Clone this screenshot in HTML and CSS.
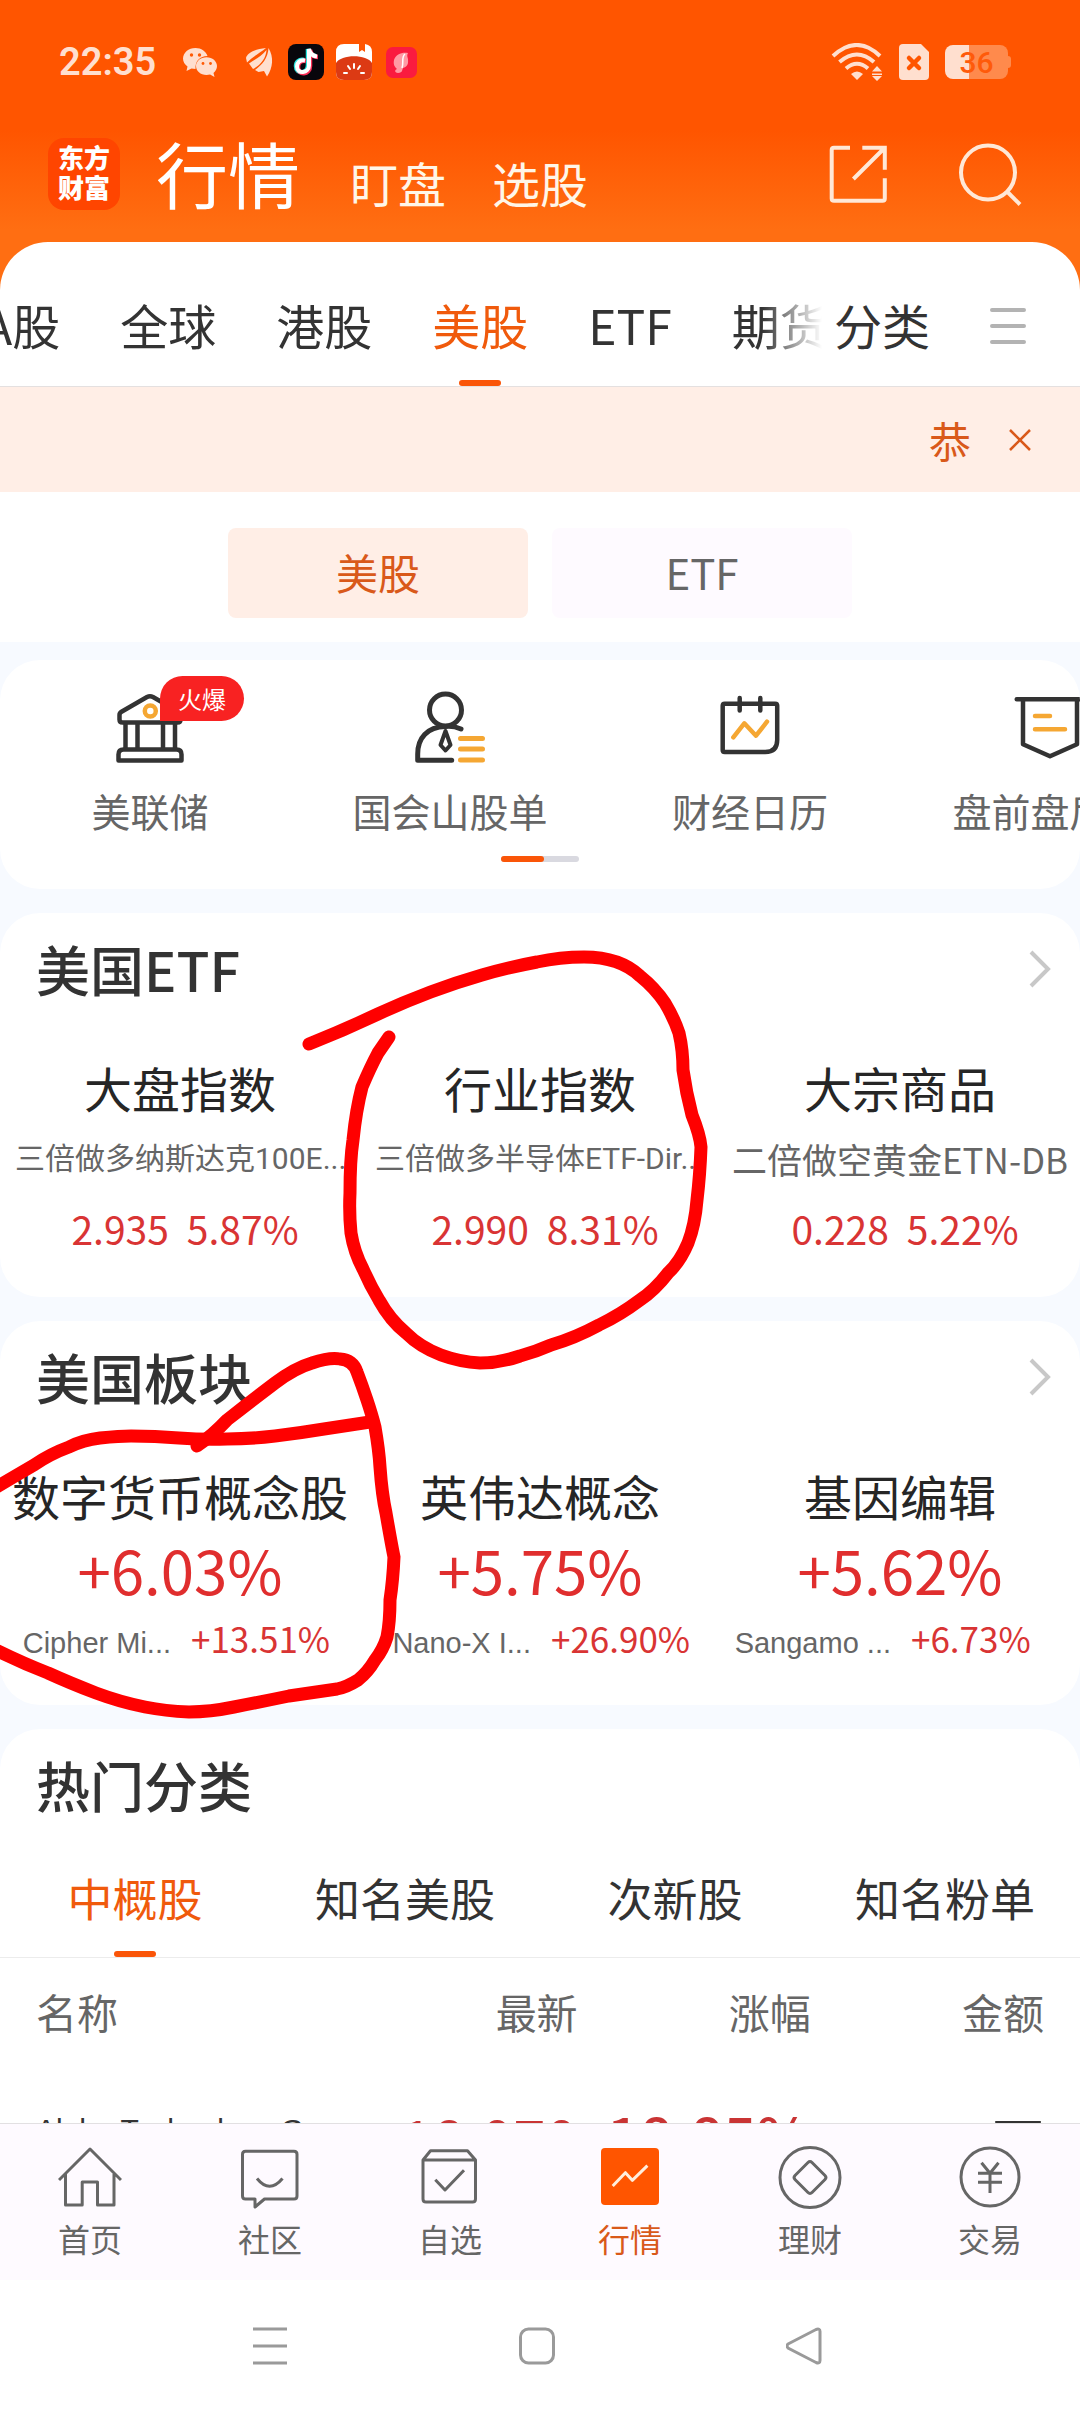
FILE: index.html
```html
<!DOCTYPE html>
<html lang="zh-CN">
<head>
<meta charset="utf-8">
<meta name="viewport" content="width=device-width, initial-scale=1">
<title>行情 - 东方财富</title>
<link rel="stylesheet" href="styles.css">
</head>
<body>
<div class="app">
  <header class="top">
    <div class="status">
      <span class="clock">22:35</span>
      <svg class="wechat" width="36" height="36" viewBox="0 0 36 36" fill="#ffdfcf">
        <path d="M13.500 4C6.500 4 1 8.700 1 14.500c0 3.200 1.700 6 4.500 8L4.500 27l5-2.500c1.300.3 2.600.5 4 .5C13 17 18 12 25.500 12 24 7.300 19.200 4 13.500 4z"/>
        <path d="M24.500 13.200C18.500 13.200 14 17.200 14 22.100S18.500 31 24.500 31c1.300 0 2.500-.2 3.600-.5L32.500 33l-1-4c2.200-1.700 3.500-4.100 3.500-6.900 0-4.900-4.500-8.900-10.500-8.900z"/>
        <g fill="#ff5a04"><circle cx="9.500" cy="11" r="1.700"/><circle cx="17.500" cy="11" r="1.700"/><circle cx="21" cy="19.500" r="1.400"/><circle cx="28.500" cy="19.500" r="1.400"/></g>
      </svg>
      <svg width="36" height="36" viewBox="0 0 36 36" fill="#ffdfcf">
        <path d="M26 4C15 5 7 9 6 14l1 4.500C12 13 20 9 26 4z"/>
        <path d="M26.500 6C21 13 14 16 9 19.500l4 5.500C21 21 26 14 26.500 6z"/>
        <path d="M28.500 4C28 14 22 21 15 26l3.500 2 5.500-1 3 5.500C33 24 34 13 28.500 4z"/>
      </svg>
      <svg width="36" height="36" viewBox="0 0 36 36">
        <rect width="36" height="36" rx="8" fill="#08060c"/>
        <g fill="none" stroke-width="4.500"><path d="M16 16c-5-1-8 2-8 6 0 9 12 8 12-1V5c1 5 4 7 8 7" stroke="#28e6e0"/><path d="M18 17c-5-1-8 2-8 6 0 9 12 8 12-1V6c1 5 4 7 8 7" stroke="#fb2c55"/><path d="M17 16.500c-5-1-8 2-8 6 0 8 12 7 12-1V5c1 5 4 7 8 7.500" stroke="#fff" stroke-width="4"/></g>
      </svg>
      <svg width="36" height="36" viewBox="0 0 36 36">
        <path d="M8 0h15v8l3-2 3 2V0q7 1 7 8v20q0 8-8 8H8q-8 0-8-8V8q0-8 8-8z" fill="#fff"/>
        <path d="M0 19C5 10 31 10 36 19v9q0 8-8 8H8q-8 0-8-8z" fill="#dc3a14"/>
        <g stroke="#fff" stroke-width="2" stroke-linecap="round"><path d="M18 20v4M12 22l2 3M24 22l-2 3M8 29h3M25 29h3"/></g>
      </svg>
      <svg width="36" height="36" viewBox="0 0 36 36">
        <rect x="2" y="3" width="31" height="31" rx="7" fill="#fa1b3f"/>
        <path d="M24 9c-6-1-12 1-14 7-1 5 1 7 3 9-3 1-2 4 1 4 5 0 4-4 5-5 6-2 5-6 5-9-1-3-1-4 0-6z" fill="#ff9aa4"/>
        <path d="M21 10c-4 3-1 9-3 14" stroke="#fff" stroke-width="1.500" fill="none"/>
      </svg>
      <div class="status-right">
        <svg width="54" height="38" viewBox="0 0 54 38" fill="none" stroke="#ffdfcf" stroke-width="4">
          <path d="M2 13Q26-9 49 13"/><path d="M8.500 19Q26 4 43 19"/><path d="M15 25.500Q26 16 37 25.500"/>
          <path d="M20 31q6-5 12 0l-6 6z" fill="#ffdfcf" stroke="none"/>
          <path d="M46 23l5 5.500H41zM41 30.500h10v1.500H41zM46 38l5-5H41z" fill="#ffdfcf" stroke="none"/>
        </svg>
        <svg width="30" height="38" viewBox="0 0 30 38">
          <path d="M4 1h18l8 8v24q0 4-4 4H4q-4 0-4-4V5q0-4 4-4z" fill="#ffdfcf"/>
          <path d="M10 15l10 10M20 15L10 25" stroke="#ff5500" stroke-width="4.500" stroke-linecap="round"/>
        </svg>
        <div class="battery"><span>36</span></div>
      </div>
    </div>
    <div class="titlebar">
      <div class="logo">东方<br>财富</div>
      <nav class="modes">
        <a class="mode mode-on" href="#quotes">行情</a>
        <a class="mode" href="#watch">盯盘</a>
        <a class="mode" href="#pick">选股</a>
      </nav>
      <div class="actions">
        <button aria-label="分享"><svg width="60" height="60" viewBox="0 0 60 60" fill="none" stroke="#ffe8d6" stroke-width="4"><path d="M22 3.700H6q-2.300 0-2.300 2.300v48.500q0 2.300 2.300 2.300h48.500q2.300 0 2.300-2.300V34.300M34.300 3.700h22.500v22M56 4.500L25.400 35"/></svg></button>
        <button aria-label="搜索"><svg width="64" height="64" viewBox="0 0 64 64" fill="none" stroke="#ffe8d6" stroke-width="4"><circle cx="30" cy="30.500" r="27"/><path d="M48.500 49L62 62.500"/></svg></button>
      </div>
    </div>
  </header>

  <main class="sheet">
    <nav class="markets">
      <div class="strip">
        <button class="market">A股</button>
        <button class="market">全球</button>
        <button class="market">港股</button>
        <button class="market market-on">美股</button>
        <button class="market">ETF</button>
        <button class="market">期货</button>
      </div>
      <button class="market">分类</button>
      <button class="menu" aria-label="菜单"><svg width="36" height="36" viewBox="0 0 36 36" stroke="#b3b3b3" stroke-width="4" stroke-linecap="round"><path d="M2 2h32M2 18h32M2 34h32"/></svg></button>
    </nav>

    <div class="notice">
      <span>恭</span>
      <button aria-label="关闭"><svg width="22" height="22" viewBox="0 0 22 22" stroke="#d9591a" stroke-width="2.500"><path d="M1 1l20 20M21 1L1 21"/></svg></button>
    </div>

    <div class="segments">
      <button class="segment segment-on">美股</button>
      <button class="segment">ETF</button>
    </div>

    <div class="cards">
      <section class="card quick">
        <div class="quick-row">
          <a class="quick-item" href="#fed">
            <span class="quick-icon">
              <svg width="84" height="84" viewBox="1 0 84 84" fill="none" stroke="#333" stroke-width="4.500">
                <path d="M15.500 36.500q-3 0-3-3V29q0-2 2-3.200L40 11q3-1.500 6 0l25.500 14.800q2 1.200 2 3.200v4.500q0 3-3 3z"/>
                <path d="M18.500 37v26M30.500 37v26M56 37v26M68 37v26"/><path d="M11.500 74.500v-6q0-5 5-5h53q5 0 5 5v6z" stroke-linejoin="round"/>
                <circle cx="43.300" cy="25" r="5.500" stroke="#f5a733"/>
              </svg>
              <span class="badge">火爆</span>
            </span>
            美联储
          </a>
          <a class="quick-item" href="#congress">
            <span class="quick-icon">
              <svg width="84" height="84" viewBox="6 0 84 84" fill="none" stroke="#333" stroke-width="5" stroke-linecap="round" stroke-linejoin="round">
                <circle cx="43.500" cy="24" r="16"/><path d="M59 43C52 40 48 40 43.500 40.500 25 41 15.700 52 15.700 68v6.200h34"/>
                <path d="M43.500 45l5 14-5 5.500-5-5.500z" stroke-width="4"/>
                <path d="M58.500 52.500h22M58.500 63h22M58.500 74h22" stroke="#f5a733"/>
              </svg>
            </span>
            国会山股单
          </a>
          <a class="quick-item" href="#calendar">
            <span class="quick-icon">
              <svg width="84" height="84" viewBox="0 0 84 84" fill="none" stroke="#333" stroke-width="4.500" stroke-linecap="round" stroke-linejoin="round">
                <path d="M16.700 17.700h50.500q2 0 2 2V54q0 12-12 12H16.700q-2 0-2-2V19.700q0-2 2-2zM31.700 12v12.500M52.300 12v12.500"/>
                <path d="M25.300 51.300l11-14 11.700 12.400 11-14" stroke="#f5a733"/>
              </svg>
            </span>
            财经日历
          </a>
          <a class="quick-item" href="#session">
            <span class="quick-icon">
              <svg width="84" height="84" viewBox="0 0 84 84" fill="none" stroke="#333" stroke-width="4.500" stroke-linecap="round" stroke-linejoin="round">
                <path d="M8.700 13.300h66.600M15 14v44.300l27 12 27-12V14"/>
                <path d="M27 30h15M27 43.300h30" stroke="#f5a733"/>
              </svg>
            </span>
            盘前盘后榜
          </a>
        </div>
        <div class="pager"><span></span></div>
      </section>

      <section class="card board">
        <h2><a href="#etf">美国ETF<svg width="24" height="38" viewBox="0 0 24 38" fill="none" stroke="#c8c8c8" stroke-width="4"><path d="M3 2l17 17L3 36"/></svg></a></h2>
        <div class="columns">
          <article class="index">
            <h3>大盘指数</h3>
            <p class="fund">三倍做多纳斯达克100E...</p>
            <p class="quote"><span>2.935</span><span>5.87%</span></p>
          </article>
          <article class="index">
            <h3>行业指数</h3>
            <p class="fund">三倍做多半导体ETF-Dir...</p>
            <p class="quote"><span>2.990</span><span>8.31%</span></p>
          </article>
          <article class="index">
            <h3>大宗商品</h3>
            <p class="fund fund-large">二倍做空黄金ETN-DB</p>
            <p class="quote"><span>0.228</span><span>5.22%</span></p>
          </article>
        </div>
      </section>

      <section class="card board">
        <h2><a href="#sectors">美国板块<svg width="24" height="38" viewBox="0 0 24 38" fill="none" stroke="#c8c8c8" stroke-width="4"><path d="M3 2l17 17L3 36"/></svg></a></h2>
        <div class="columns">
          <article class="sector">
            <h3>数字货币概念股</h3>
            <p class="gain">+6.03%</p>
            <p class="leader"><span>Cipher Mi...</span><b>+13.51%</b></p>
          </article>
          <article class="sector">
            <h3>英伟达概念</h3>
            <p class="gain">+5.75%</p>
            <p class="leader"><span>Nano-X I...</span><b>+26.90%</b></p>
          </article>
          <article class="sector">
            <h3>基因编辑</h3>
            <p class="gain">+5.62%</p>
            <p class="leader"><span>Sangamo ...</span><b>+6.73%</b></p>
          </article>
        </div>
      </section>

      <section class="card hot">
        <h2>热门分类</h2>
        <nav class="groups">
          <button class="group group-on">中概股</button>
          <button class="group">知名美股</button>
          <button class="group">次新股</button>
          <button class="group">知名粉单</button>
        </nav>
        <table class="stocks">
          <thead><tr><th class="name">名称</th><th>最新</th><th>涨幅</th><th>金额</th></tr></thead>
          <tbody><tr>
            <td class="name">Alpha Technology G...<small>ATGL</small></td>
            <td class="up">18.070</td><td class="up strong">18.85%</td><td class="amount">1.4万</td>
          </tr></tbody>
        </table>
      </section>
    </div>
  </main>

  <nav class="tabbar">
    <a class="tab" href="#home"><svg width="64" height="64" viewBox="0 0 64 64"><path d="M1 34L32 3l31 31M7.500 28v31h16.700V36h15.300v23H56V28"/></svg>首页</a>
    <a class="tab" href="#community"><svg width="64" height="64" viewBox="0 0 64 64"><path d="M7.500 5.300h48.500q3 0 3 3V50q0 3-3 3H26.500L17 61v-8H7.500q-3 0-3-3V8.300q0-3 3-3zM19 32.500q12.500 15.500 25.500 0"/></svg>社区</a>
    <a class="tab" href="#mine"><svg width="64" height="64" viewBox="0 0 64 64"><path d="M5 14l7.500-9.300h37L57.500 14v39q0 3-3 3H8q-3 0-3-3zM5 14h52M17.300 33.700L27 44l19-19.700"/></svg>自选</a>
    <a class="tab tab-on" href="#quotes"><svg width="64" height="64" viewBox="0 0 64 64"><rect x="3" y="2" width="58" height="57" rx="4"/><path d="M14.700 40l12.700-13.300 6.900 7.600 15.100-14.600"/></svg>行情</a>
    <a class="tab" href="#wealth"><svg width="64" height="64" viewBox="0 0 64 64"><circle cx="32" cy="31.500" r="30"/><path d="M30 16.500q2-2 4 0l13 13q2 2 0 4l-13 13q-2 2-4 0l-13-13q-2-2 0-4z"/></svg>理财</a>
    <a class="tab" href="#trade"><svg width="64" height="64" viewBox="0 0 64 64"><circle cx="32" cy="31" r="29"/><path d="M23.500 16.700L32 27.300l8.500-10.600M20 27.300h24M20 36.300h24M32 27.300V47"/></svg>交易</a>
  </nav>

  <div class="system">
    <svg width="36" height="38" viewBox="0 0 36 38"><path d="M1 2h34M1 19h34M1 36h34"/></svg>
    <svg width="36" height="38" viewBox="0 0 36 38"><rect x="1.500" y="2" width="33" height="34" rx="8"/></svg>
    <svg width="36" height="38" viewBox="0 0 36 38"><path d="M2 17L30 2.500q4-1.500 4 2v29q0 3.500-4 2L2 21q-2-2 0-4z"/></svg>
  </div>

  <svg class="marker" width="1080" height="800" viewBox="0 940 1080 800" aria-hidden="true">
    <path d="M309 1044Q344 1030 378 1014Q430 990 482 975Q510 967 537 962Q560 957 584 957Q620 957 640 976Q655 988 665 1003Q674 1018 679 1033Q683 1050 683 1070Q686 1092 692 1115Q700 1135 701 1147Q700 1175 697 1200Q695 1225 688 1243Q680 1262 668 1273Q655 1290 640 1300Q620 1315 599 1325Q575 1338 551 1345Q535 1352 520 1356Q500 1363 480 1363Q460 1362 441 1355Q420 1347 406 1333Q390 1320 379 1300Q370 1285 363 1269Q354 1252 351 1233Q349 1213 350 1193Q350 1160 353 1140Q356 1110 362 1087Q370 1068 378 1053L389 1037"/>
    <path d="M197 1446Q213 1435 227 1420Q250 1402 275 1383Q295 1368 312 1363Q330 1357 340 1359Q353 1360 357 1372Q362 1385 367 1400Q372 1415 375 1427Q379 1450 380 1467Q382 1495 386 1513Q391 1542 394 1557Q393 1580 390 1600Q390 1622 387 1637Q383 1650 375 1660Q368 1672 358 1680Q347 1687 337 1689Q310 1693 289 1696Q260 1702 234 1707Q210 1712 189 1712Q165 1711 145 1707Q120 1702 96 1693Q70 1683 48 1673Q20 1662-10 1647"/>
    <path d="M-10 1491Q10 1479 34 1465Q50 1454 69 1447Q83 1440 100 1438Q120 1436 131 1436Q155 1436 179 1438Q205 1440 227 1439Q250 1439 275 1436Q300 1433 324 1429L370 1422"/>
  </svg>
</div>
</body>
</html>
```
FILE: styles.css
```css
* { box-sizing: border-box; }

body {
  margin: 0;
  background: #fff;
  color: #333;
  font-family: "Noto Sans CJK SC", sans-serif;
}

h2, h3, p { margin: 0; font-weight: 400; }
a { color: inherit; text-decoration: none; }
button { border: 0; padding: 0; background: none; color: inherit; font: inherit; }
svg { display: block; flex: none; }

.app {
  position: relative;
  display: flex;
  flex-direction: column;
  height: 100vh;
  overflow: hidden;
  background: linear-gradient(#ff5500 130px, #ff6e12 230px);
}

/* Status bar and title */
.status {
  display: flex;
  align-items: center;
  gap: 12px;
  height: 124px;
  padding: 0 69px 0 59px;
}
.clock {
  margin-right: 14px;
  color: #ffdfcf;
  font: 600 38px/48px Roboto, sans-serif;
}
.wechat { margin-right: 10px; }
.status-right { display: flex; align-items: center; gap: 14px; margin-left: auto; }
.battery {
  position: relative;
  width: 63px;
  height: 34px;
  margin: 0 3px 0 2px;
  border-radius: 8px;
  background: linear-gradient(to right, #ffdfcf 24px, #ff8a4c 24px);
  color: #ff5a0a;
  font: 500 30px/35px Roboto, sans-serif;
  text-align: center;
}
.battery::after {
  content: "";
  position: absolute;
  top: 11px;
  right: -3px;
  width: 3px;
  height: 12px;
  border-radius: 0 3px 3px 0;
  background: #ff8a4c;
}
.titlebar {
  display: flex;
  align-items: center;
  height: 118px;
  padding: 0 58px 18px 48px;
}
.logo {
  width: 72px;
  height: 72px;
  padding-top: 4px;
  border-radius: 16px;
  background: #ff4500;
  color: #fff;
  font-size: 26px;
  font-weight: 900;
  line-height: 30px;
  text-align: center;
}
.modes { display: flex; align-items: baseline; margin: 6px 0 0 36px; color: #fff6e8; }
.mode { margin-right: 46px; font-size: 48px; line-height: 100px; }
.mode-on { margin-right: 50px; font-size: 72px; color: #fff; }
.actions { display: flex; align-items: center; gap: 70px; margin-left: auto; }

/* Market tabs */
.sheet {
  flex: 1;
  min-height: 0;
  overflow: hidden;
  border-radius: 48px 48px 0 0;
  background: #fff;
}
.markets {
  display: flex;
  height: 145px;
  padding-right: 54px;
  border-bottom: 1px solid #e4e0e0;
}
.strip {
  flex: 1;
  display: flex;
  gap: 60px;
  min-width: 0;
  margin-right: 12px;
  overflow: hidden;
  -webkit-mask-image: linear-gradient(to right, #000 calc(100% - 60px), transparent);
  mask-image: linear-gradient(to right, #000 calc(100% - 60px), transparent);
}
.strip .market:first-child { margin-left: -17px; }
.market {
  position: relative;
  flex: none;
  padding-top: 20px;
  font-size: 48px;
  white-space: nowrap;
}
.market-on { color: #f05a0c; }
.market-on::after, .group-on::after {
  content: "";
  position: absolute;
  bottom: 0;
  left: calc(50% - 21px);
  width: 42px;
  height: 6px;
  border-radius: 3px;
  background: #fa5508;
}
.menu { margin-left: 60px; padding-top: 24px; }

.notice {
  display: flex;
  align-items: center;
  justify-content: flex-end;
  gap: 38px;
  height: 105px;
  padding-right: 49px;
  background: #ffeee6;
  color: #d9591a;
  font-size: 42px;
}

.segments { display: flex; justify-content: center; gap: 24px; padding: 36px 0 24px; }
.segment {
  width: 300px;
  height: 90px;
  padding-bottom: 4px;
  border-radius: 8px;
  background: #fefaff;
  color: #666;
  font-size: 42px;
}
.segment-on { background: #ffeee6; color: #d9591a; }

/* Cards */
.cards {
  display: flex;
  flex-direction: column;
  gap: 24px;
  padding-top: 18px;
  background: #f7faff;
}
.card { overflow: hidden; border-radius: 40px; background: #fff; }
.card h2 { padding: 0 28px 0 36px; font-size: 54px; font-weight: 500; line-height: 60px; }
.card h2 a { display: flex; align-items: center; justify-content: space-between; }

.quick { padding: 26px 0 27px; }
.quick-row { display: flex; }
.quick-item {
  display: flex;
  flex: 0 0 27.78%;
  flex-direction: column;
  align-items: center;
  gap: 15px;
  color: #666;
  font-size: 39px;
  line-height: 50px;
  white-space: nowrap;
}
.quick-icon { position: relative; }
.badge {
  position: absolute;
  top: -10px;
  left: 52px;
  width: 84px;
  border-radius: 23px 23px 23px 0;
  background: #f82222;
  color: #fff;
  font-size: 24px;
  line-height: 45px;
  text-align: center;
}
.pager { width: 78px; height: 6px; margin: 21px auto 0; border-radius: 3px; background: #d9d9e0; }
.pager span { display: block; width: 43px; height: 6px; border-radius: 3px; background: #fa5508; }

.board { padding: 26px 0 45px; }
.columns { display: grid; grid-template-columns: repeat(3, minmax(0, 1fr)); margin-top: 58px; }
.columns h3 { color: #262626; font-size: 48px; line-height: 60px; text-align: center; white-space: nowrap; }
.fund {
  margin-top: 20px;
  padding-left: 15px;
  color: #666;
  font-family: Roboto, "Noto Sans CJK SC", sans-serif;
  font-size: 30px;
  line-height: 44px;
  white-space: nowrap;
}
.fund-large { padding-left: 12px; font-family: "Noto Sans CJK SC", sans-serif; font-size: 35px; }
.quote {
  display: flex;
  justify-content: center;
  gap: 18px;
  margin-top: 23px;
  padding-left: 10px;
  color: #d93434;
  font-size: 39px;
  line-height: 48px;
}
.gain { margin-top: 14px; color: #e02e2e; font-size: 60px; line-height: 60px; text-align: center; }
.leader {
  display: grid;
  grid-template-columns: 171px auto;
  align-items: baseline;
  gap: 20px;
  height: 44px;
  margin-top: 17px;
  line-height: 44px;
}
.leader span {
  color: #666;
  font-family: "Liberation Sans", sans-serif;
  font-size: 29px;
  text-align: right;
  white-space: nowrap;
}
.leader b { color: #d93434; font-size: 35px; font-weight: 400; }

/* Stock groups */
.hot { padding-top: 26px; border-radius: 40px 40px 0 0; }
.groups {
  display: grid;
  grid-template-columns: repeat(4, 1fr);
  margin-top: 53px;
  border-bottom: 1px solid #ececec;
}
.group { position: relative; padding-bottom: 29px; font-size: 45px; line-height: 60px; }
.group-on { color: #f05a0c; }
.stocks { width: 100%; padding: 0 36px; border-spacing: 0; table-layout: fixed; }
.stocks th { height: 110px; padding: 0 0 5px; color: #666; font-size: 41px; font-weight: 400; text-align: right; }
.stocks td { height: 150px; padding: 0 0 8px; font-size: 58px; line-height: 60px; text-align: right; }
.stocks .name { width: 30.6%; text-align: left; }
.stocks td.name {
  padding: 8px 0 0;
  font: 30px/44px "Liberation Sans", sans-serif;
  white-space: nowrap;
}
.stocks small { display: block; color: #999; font-size: 26px; line-height: 34px; }
.stocks .up { color: #c93434; }
.stocks .strong { padding-bottom: 14px; font-weight: 500; }
.stocks .amount { font-size: 52px; }

/* Bottom navigation */
.tabbar {
  display: grid;
  grid-template-columns: repeat(6, 1fr);
  padding: 22px 0;
  border-top: 1px solid #e2e0e2;
  background: #fefaff;
}
.tab {
  display: flex;
  flex-direction: column;
  align-items: center;
  gap: 8px;
  color: #666;
  font-size: 32px;
  line-height: 40px;
}
.tab svg { fill: none; stroke: #666; stroke-width: 3; stroke-linejoin: round; }
.tab-on { color: #d9591a; }
.tab-on svg { stroke: #ffeedd; }
.tab-on rect { fill: #ff5500; stroke: none; }

.system {
  display: flex;
  align-items: center;
  justify-content: space-between;
  height: 132px;
  padding: 0 258px 0 252px;
  background: #fff;
}
.system svg { fill: none; stroke: #9a9a9a; stroke-width: 3; }

/* Hand-drawn marker strokes over the boards */
.marker {
  position: absolute;
  top: 940px;
  left: 0;
  fill: none;
  stroke: #f00;
  stroke-width: 13;
  stroke-linecap: round;
  pointer-events: none;
}
```
